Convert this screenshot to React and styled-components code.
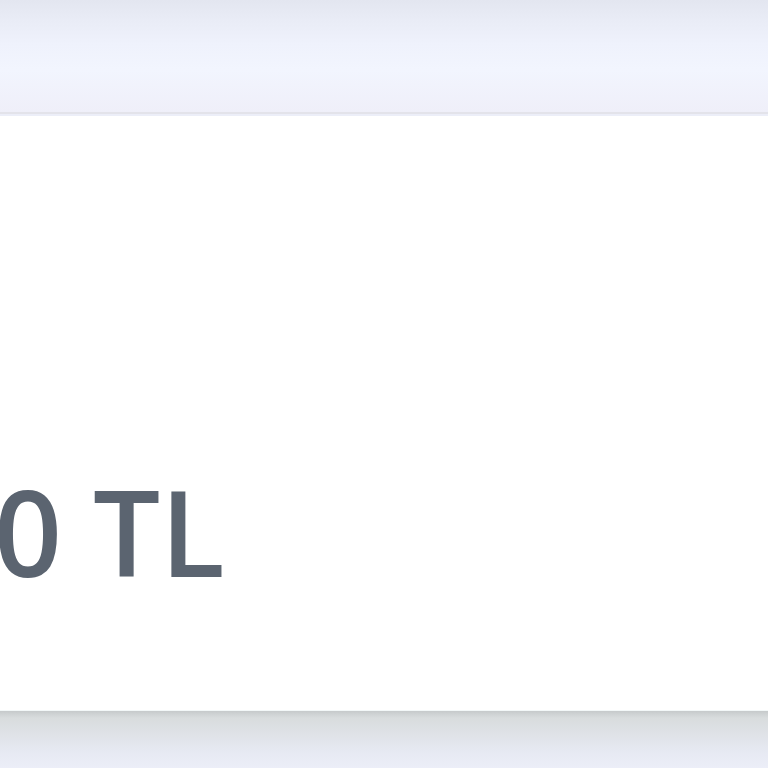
import styled, { createGlobalStyle } from "styled-components";

const Global = createGlobalStyle`
  html, body {
    margin: 0;
    padding: 0;
    background: #eceef8;
    font-family: "Open Sans", "Liberation Sans", sans-serif;
    overflow: hidden;
  }
`;

const Page = styled.div`
  width: 768px;
  height: 768px;
  display: flex;
  flex-direction: column;
  overflow: hidden;
`;

const TopBar = styled.div`
  height: 112px;
  flex-shrink: 0;
  background: linear-gradient(
    to bottom,
    #e3e6f0 0%,
    #e9ecf6 18%,
    #eff2fc 40%,
    #f2f5fe 62%,
    #efeff9 100%
  );
  border-bottom: 2px solid #e3e3ea;
`;

const Card = styled.div`
  height: 594px;
  flex-shrink: 0;
  margin-top: 2px;
  background: #ffffff;
  position: relative;
  z-index: 1;
  border-bottom: 1px solid #f3f8f8;
`;

const Amount = styled.div`
  padding-top: 356px;
  margin-left: -6px;
  font-size: 119px;
  line-height: 1;
  font-weight: 600;
  color: #5b6470;
  white-space: nowrap;
`;

const Bottom = styled.div`
  flex: 1;
  background: linear-gradient(
    to bottom,
    #c6cacb 0%,
    #d8dcdd 12%,
    #dfe2e7 40%,
    #e6e9f2 70%,
    #eceef8 100%
  );
`;

export default function App() {
  return (
    <Page>
      <Global />
      <TopBar />
      <Card>
        <Amount>0 TL</Amount>
      </Card>
      <Bottom />
    </Page>
  );
}
